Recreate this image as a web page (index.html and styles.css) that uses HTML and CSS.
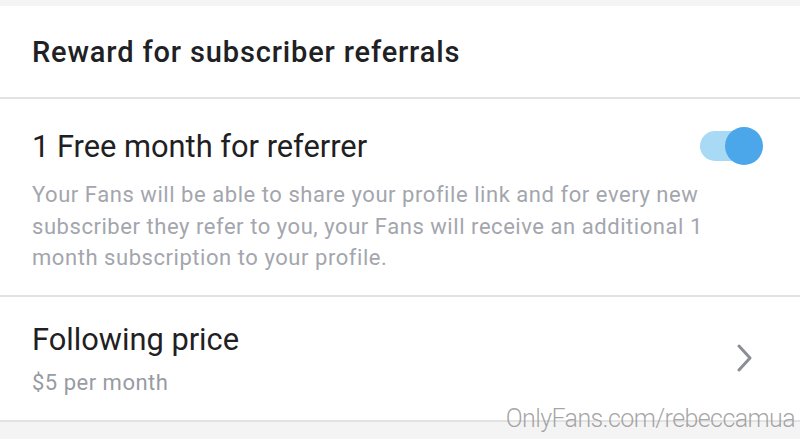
FILE: index.html
```html
<!DOCTYPE html>
<html lang="en">
<head>
<meta charset="utf-8">
<title>Referral settings</title>
<link rel="stylesheet" href="styles.css">
</head>
<body>
  <div class="top-gap"></div>
  <main class="card">
    <header class="card-header">Reward for subscriber referrals</header>
    <section class="setting">
      <div class="setting-row">
        <span class="setting-title">1 Free month for referrer</span>
        <span class="toggle is-on" role="switch" aria-checked="true">
          <span class="toggle-track"></span>
          <span class="toggle-knob"></span>
        </span>
      </div>
      <p class="setting-desc">Your Fans will be able to share your profile link and for every new subscriber they refer to you, your Fans will receive an additional 1 month subscription to your profile.</p>
    </section>
    <section class="setting link-row">
      <div class="link-text">
        <span class="setting-title">Following price</span>
        <span class="setting-sub">$5 per month</span>
      </div>
      <svg class="chevron" width="18" height="28" viewBox="0 0 18 28" aria-hidden="true">
        <path d="M3 2 L14 14 L3 26" fill="none" stroke="#8b8e94" stroke-width="3" stroke-linecap="round" stroke-linejoin="round"/>
      </svg>
    </section>
  </main>
  <div class="watermark">OnlyFans.com/rebeccamua</div>
</body>
</html>
```

FILE: styles.css
```css
html, body {
  margin: 0;
  padding: 0;
}

body {
  background: #f4f4f5;
  font-family: Roboto, "Noto Sans", sans-serif;
  color: #1f2023;
  width: 800px;
  height: 439px;
  overflow: hidden;
  position: relative;
}

.top-gap {
  height: 6px;
}

.card {
  background: #fff;
}

.card-header {
  display: flex;
  align-items: center;
  box-sizing: border-box;
  height: 93px;
  padding-left: 32px;
  font-size: 29px;
  font-weight: 500;
  letter-spacing: 0.85px;
  color: #202124;
  border-bottom: 2px solid #e2e2e4;
}

.setting {
  padding: 0 36px 0 32px;
  border-bottom: 2px solid #e2e2e4;
}

.setting-row {
  display: flex;
  align-items: center;
  justify-content: space-between;
  height: 94px;
}

.setting-title {
  font-size: 30.8px;
  color: #1f2023;
}

.setting-desc {
  margin: -14px 0 0;
  padding-bottom: 21px;
  font-size: 22px;
  letter-spacing: 0.55px;
  line-height: 31.5px;
  color: #a3a6ad;
}

.toggle {
  position: relative;
  display: block;
  width: 66px;
  height: 40px;
}

.toggle-track {
  position: absolute;
  left: 2px;
  top: 5px;
  width: 58px;
  height: 30px;
  border-radius: 15px;
  background: #a8d9f5;
}

.toggle-knob {
  position: absolute;
  right: 1px;
  top: 1px;
  width: 38px;
  height: 38px;
  border-radius: 50%;
  background: #4ba6ea;
}

.link-row {
  display: flex;
  align-items: center;
  justify-content: space-between;
  box-sizing: border-box;
  height: 125px;
  padding-right: 46px;
}

.link-text {
  display: flex;
  flex-direction: column;
  gap: 12px;
}

.setting-sub {
  font-size: 22px;
  letter-spacing: 0.5px;
  color: #989ba2;
}

.watermark {
  position: absolute;
  right: 5px;
  top: 404px;
  font-size: 25px;
  letter-spacing: -0.6px;
  font-weight: 300;
  color: rgba(150, 150, 150, 0.85);
}
```
